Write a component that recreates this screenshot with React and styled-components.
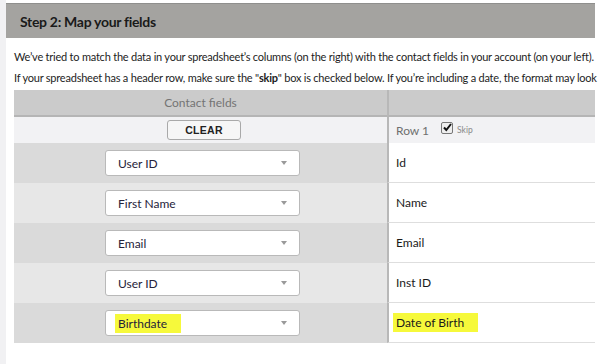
import styled, { createGlobalStyle } from 'styled-components'

const Global = createGlobalStyle`
    body {
        margin: 0;
        background: #ffffff;
        font-family: Lato, "Open Sans", sans-serif;
        color: #222;
    }
`

const Page = styled.div`
    display: flex;
    width: 599px;
    height: 364px;
    overflow: hidden;
`

const SideStrip = styled.div`
    width: 6px;
    flex-shrink: 0;
    background: #f1f1f3;
`

const Main = styled.div`
    flex: 1;
    padding-top: 3px;
    overflow: hidden;
`

const StepHeader = styled.div`
    height: 34px;
    margin-right: 4px;
    background: #a4a3a0;
    border-top: 1px solid #8f8f8d;
    display: flex;
    align-items: center;
    padding-left: 14px;
    font-weight: 700;
    font-size: 14px;
    letter-spacing: -0.3px;
    color: #1a1a1a;
`

const Intro = styled.p`
    margin: 0;
    padding-left: 8px;
    font-size: 11px;
    letter-spacing: -0.22px;
    line-height: 21px;
    white-space: nowrap;
    overflow: hidden;
    color: #1d1d1d;

    &:first-of-type {
        margin-top: 8px;
    }

    b {
        font-weight: 700;
    }
`

const Table = styled.div`
    margin: 2px 0 0 8px;
    width: 581px;
    display: grid;
    grid-template-columns: 373px 1fr;
`

const HeadCell = styled.div`
    height: 25px;
    background: #cbcbcb;
    border-bottom: 2px solid #b5b5b5;
    border-left: ${p => (p.$right ? '2px solid #b8b8b8' : 'none')};
    display: flex;
    align-items: center;
    justify-content: center;
    font-size: 12px;
    color: #747474;
`

const SubCell = styled.div`
    height: 26px;
    background: #f2f2f4;
    border-left: ${p => (p.$right ? '2px solid #b8b8b8' : 'none')};
    display: flex;
    align-items: center;
    justify-content: ${p => (p.$right ? 'flex-start' : 'center')};
    padding-left: ${p => (p.$right ? '7px' : '0')};
    font-size: 12px;
    color: #6f6f6f;
`

const ClearButton = styled.button`
    width: 74px;
    height: 20px;
    margin-left: 7px;
    background: #f6f6f6;
    border: 1px solid #a9a9a9;
    border-radius: 3px;
    font-family: "Liberation Sans", Arial, sans-serif;
    font-weight: 700;
    font-size: 10.5px;
    color: #222;
    letter-spacing: 0.3px;
    padding: 0;
`

const Check = styled.span`
    display: inline-block;
    width: 10px;
    height: 10px;
    margin-left: 12px;
    border: 1px solid #777;
    border-radius: 2px;
    background: #eee;
    position: relative;
    top: -2px;

    svg {
        position: absolute;
        left: 0;
        top: -1px;
    }
`

const SkipLabel = styled.span`
    font-size: 8.5px;
    color: #8a8a8a;
    margin-left: 4px;
`

const FieldCell = styled.div`
    height: 40px;
    background: ${p => (p.$shade ? '#dadada' : '#e7e7e7')};
    display: flex;
    align-items: center;
    padding-left: 91px;
`

const ColumnCell = styled.div`
    height: 39px;
    background: #ffffff;
    border-left: 2px solid #b8b8b8;
    border-bottom: 1px solid #dedede;
    display: flex;
    align-items: center;
    padding-left: 7px;
    font-size: 12px;
    color: #1a1a1a;
`

const Select = styled.div`
    width: 195px;
    height: 26px;
    box-sizing: border-box;
    background: #fff;
    border: 1px solid #b9b9b9;
    border-radius: 3px;
    display: flex;
    align-items: center;
    justify-content: space-between;
    padding: 0 12px 0 12px;
    font-size: 12px;
    color: #26233a;
`

const Caret = styled.span`
    width: 0;
    height: 0;
    border-left: 3.5px solid transparent;
    border-right: 3.5px solid transparent;
    border-top: 4px solid #9a9a9a;
`

const Mark = styled.span`
    background: ${p => (p.$on ? '#f6f93b' : 'transparent')};
    padding: ${p => (p.$on ? '2px 14px 2px 3px' : '0')};
    margin-left: ${p => (p.$on ? '-3px' : '0')};
`

const rows = [
    { field: 'User ID', column: 'Id' },
    { field: 'First Name', column: 'Name' },
    { field: 'Email', column: 'Email' },
    { field: 'User ID', column: 'Inst ID' },
    { field: 'Birthdate', column: 'Date of Birth', highlight: true },
]

const App = () => {
    return (
        <Page>
            <Global />
            <SideStrip />
            <Main>
                <StepHeader>Step 2: Map your fields</StepHeader>
                <Intro>We’ve tried to match the data in your spreadsheet’s columns (on the right) with the contact fields in your account (on your left).</Intro>
                <Intro>If your spreadsheet has a header row, make sure the "<b>skip</b>" box is checked below. If you’re including a date, the format may look different.</Intro>
                <Table>
                    <HeadCell>Contact fields</HeadCell>
                    <HeadCell $right />
                    <SubCell>
                        <ClearButton>CLEAR</ClearButton>
                    </SubCell>
                    <SubCell $right>
                        Row 1
                        <Check>
                            <svg width="11" height="11" viewBox="0 0 11 11">
                                <path d="M2 5.5 L4.3 8 L9 2" fill="none" stroke="#111" strokeWidth="2" />
                            </svg>
                        </Check>
                        <SkipLabel>Skip</SkipLabel>
                    </SubCell>
                    {rows.map((r, i) => (
                        <>
                            <FieldCell key={'f' + i} $shade={i % 2 === 0}>
                                <Select>
                                    <Mark $on={r.highlight}>{r.field}</Mark>
                                    <Caret />
                                </Select>
                            </FieldCell>
                            <ColumnCell key={'c' + i}>
                                <Mark $on={r.highlight}>{r.column}</Mark>
                            </ColumnCell>
                        </>
                    ))}
                </Table>
            </Main>
        </Page>
    )
}

export default App
